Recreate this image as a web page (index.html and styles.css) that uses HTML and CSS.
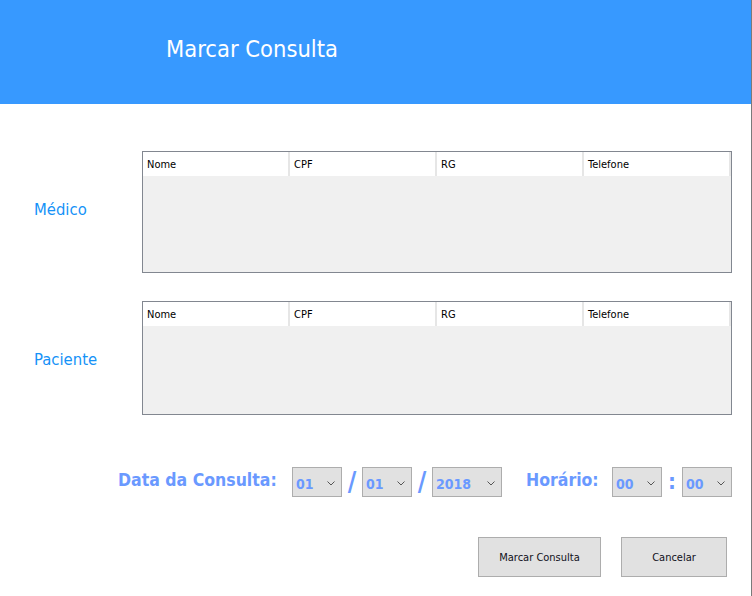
FILE: index.html
```html
<!DOCTYPE html>
<html lang="pt-BR">
<head>
<meta charset="utf-8">
<title>Marcar Consulta</title>
<link rel="stylesheet" href="styles.css">
</head>
<body>
<div class="window">
  <header class="topbar">
    <h1 class="title">Marcar Consulta</h1>
  </header>
  <main class="content">
    <section class="grid-row doctor">
      <label class="row-label">Médico</label>
      <div class="table table-doctor">
        <div class="thead">
          <div class="th">Nome</div>
          <div class="th">CPF</div>
          <div class="th">RG</div>
          <div class="th">Telefone</div>
        </div>
        <div class="tbody"></div>
      </div>
    </section>
    <section class="grid-row patient">
      <label class="row-label">Paciente</label>
      <div class="table table-patient">
        <div class="thead">
          <div class="th">Nome</div>
          <div class="th">CPF</div>
          <div class="th">RG</div>
          <div class="th">Telefone</div>
        </div>
        <div class="tbody"></div>
      </div>
    </section>
    <section class="date-row">
      <span class="field-label date-label">Data da Consulta:</span>
      <div class="combo"><span class="combo-value">01</span><svg class="chev" width="8" height="5" viewBox="0 0 8 5"><path d="M0.5 0.5 L4 4 L7.5 0.5" fill="none" stroke="#555" stroke-width="1"/></svg></div>
      <span class="sep">/</span>
      <div class="combo"><span class="combo-value">01</span><svg class="chev" width="8" height="5" viewBox="0 0 8 5"><path d="M0.5 0.5 L4 4 L7.5 0.5" fill="none" stroke="#555" stroke-width="1"/></svg></div>
      <span class="sep">/</span>
      <div class="combo combo-year"><span class="combo-value">2018</span><svg class="chev" width="8" height="5" viewBox="0 0 8 5"><path d="M0.5 0.5 L4 4 L7.5 0.5" fill="none" stroke="#555" stroke-width="1"/></svg></div>
      <span class="field-label time-label">Horário:</span>
      <div class="combo"><span class="combo-value">00</span><svg class="chev" width="8" height="5" viewBox="0 0 8 5"><path d="M0.5 0.5 L4 4 L7.5 0.5" fill="none" stroke="#555" stroke-width="1"/></svg></div>
      <span class="sep colon">:</span>
      <div class="combo"><span class="combo-value">00</span><svg class="chev" width="8" height="5" viewBox="0 0 8 5"><path d="M0.5 0.5 L4 4 L7.5 0.5" fill="none" stroke="#555" stroke-width="1"/></svg></div>
    </section>
    <section class="actions">
      <button class="btn btn-primary">Marcar Consulta</button>
      <button class="btn btn-cancel">Cancelar</button>
    </section>
  </main>
</div>
</body>
</html>
```
FILE: styles.css
```css
html, body {
  margin: 0;
  padding: 0;
  background: #ffffff;
}
.window {
  width: 751px;
  height: 596px;
  border-right: 1px solid #7a7a7a;
  font-family: "DejaVu Sans Condensed", "DejaVu Sans", sans-serif;
  overflow: hidden;
}
.topbar {
  height: 104px;
  background: #3799ff;
  display: flex;
  align-items: center;
  padding-left: 166px;
  box-sizing: border-box;
}
.title {
  margin: 0;
  color: #ffffff;
  font-weight: normal;
  font-size: 23.5px;
  line-height: 1;
  margin-top: -5px;
}
.content {
  padding-top: 47px;
}
.grid-row {
  display: flex;
  align-items: center;
}
.patient {
  margin-top: 28px;
}
.row-label {
  width: 108px;
  padding-left: 34px;
  color: #1592f7;
  font-size: 16.5px;
}
.doctor .row-label {
  padding-bottom: 6px;
}
.patient .row-label {
  padding-top: 2px;
}
.table {
  width: 588px;
  border: 1px solid #828790;
  background: #f0f0f0;
}
.table-doctor { height: 120px; }
.table-patient { height: 112px; }
.thead {
  display: flex;
  height: 24px;
  background: #ffffff;
}
.th {
  width: 141px;
  border-right: 2px solid #e6e6e6;
  padding-left: 4px;
  padding-top: 2px;
  box-sizing: content-box;
  font-size: 11px;
  line-height: 22px;
  color: #000000;
}
.date-row {
  display: flex;
  align-items: center;
  margin-top: 52px;
  padding-left: 118px;
  height: 30px;
}
.field-label {
  color: #6a99ff;
  font-weight: bold;
  font-size: 17.5px;
  padding-bottom: 5px;
}
.date-label {
  width: 174px;
}
.time-label {
  margin-left: 24px;
  width: 86px;
}
.combo {
  height: 28px;
  border: 1px solid #adadad;
  background: #e1e1e1;
  display: flex;
  align-items: center;
  justify-content: space-between;
  padding: 0 6px 0 3px;
  box-sizing: content-box;
  width: 39px;
}
.combo-year {
  width: 59px;
}
.combo-value {
  color: #6a99ff;
  font-weight: bold;
  font-size: 14px;
  padding-top: 3px;
}
.chev {
  display: block;
  margin-top: 2px;
}
.sep {
  width: 20px;
  text-align: center;
  color: #6a99ff;
  font-weight: bold;
  font-size: 26px;
  line-height: 30px;
}
.colon {
  font-size: 22px;
}
.actions {
  display: flex;
  margin-top: 40px;
  padding-left: 478px;
  gap: 20px;
}
.btn {
  height: 40px;
  border: 1px solid #adadad;
  background: #e1e1e1;
  font-family: "DejaVu Sans Condensed", "DejaVu Sans", sans-serif;
  font-size: 11px;
  color: #101020;
  padding: 0;
  margin: 0;
}
.btn-primary { width: 123px; }
.btn-cancel { width: 106px; }
```
